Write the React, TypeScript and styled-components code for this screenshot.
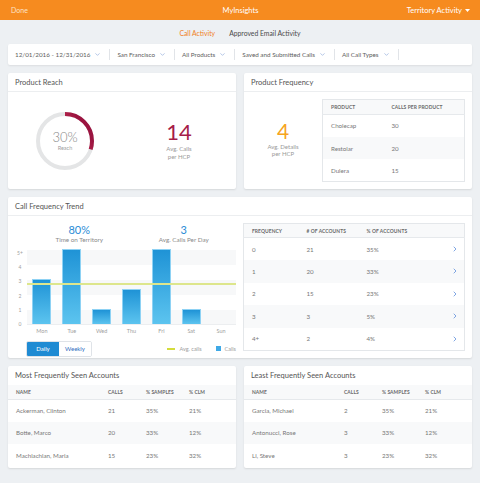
import React from "react";
import styled, { createGlobalStyle } from "styled-components";
import { ChevronDown, ChevronRight } from "lucide-react";

const GlobalStyle = createGlobalStyle`
  html, body {
    margin: 0;
    padding: 0;
    background: #edf0f3;
    font-family: Lato, "Open Sans", "Liberation Sans", sans-serif;
    color: #555;
  }
  * { box-sizing: border-box; }
`;

const filters = [
  "12/01/2016 - 12/31/2016",
  "San Francisco",
  "All Products",
  "Saved and Submitted Calls",
  "All Call Types",
];

const products = [
  { name: "Cholecap", calls: 30 },
  { name: "Restolar", calls: 20 },
  { name: "Dulera", calls: 15 },
];

const days = [
  { day: "Mon", value: 3 },
  { day: "Tue", value: 5 },
  { day: "Wed", value: 1 },
  { day: "Thu", value: 2.3 },
  { day: "Fri", value: 5 },
  { day: "Sat", value: 1 },
  { day: "Sun", value: 0 },
];

const frequencies = [
  { f: "0", n: 21, p: "35%" },
  { f: "1", n: 20, p: "33%" },
  { f: "2", n: 15, p: "23%" },
  { f: "3", n: 3, p: "5%" },
  { f: "4+", n: 2, p: "4%" },
];

const mostSeen = [
  { name: "Ackerman, Clinton", calls: 21, samples: "35%", clm: "21%" },
  { name: "Botte, Marco", calls: 20, samples: "33%", clm: "12%" },
  { name: "Machlachlan, Maria", calls: 15, samples: "23%", clm: "32%" },
];

const leastSeen = [
  { name: "Garcia, Michael", calls: 2, samples: "35%", clm: "21%" },
  { name: "Antonucci, Rose", calls: 3, samples: "33%", clm: "12%" },
  { name: "Li, Steve", calls: 3, samples: "23%", clm: "32%" },
];

const PLOT_HEIGHT = 75;
const MAX_VALUE = 5;
const AVG_CALLS = 2.55;

/* ---------- top bar & tabs ---------- */

const TopBar = styled.header`
  height: 20px;
  background: #f68b1f;
  display: grid;
  grid-template-columns: 1fr auto 1fr;
  align-items: center;
  padding: 0 10px 0 11px;
  color: #fff;
`;

const Done = styled.span`
  font-size: 7px;
  color: #fde3c6;
`;

const AppTitle = styled.span`
  font-size: 7.5px;
`;

const Menu = styled.span`
  justify-self: end;
  font-size: 7.5px;
  display: flex;
  align-items: center;
  gap: 3px;
`;

const Tabs = styled.nav`
  height: 24px;
  display: flex;
  justify-content: center;
  align-items: center;
  gap: 14px;
  padding-top: 2px;
`;

const Tab = styled.span<{ $active?: boolean }>`
  font-size: 6.8px;
  color: ${(p) => (p.$active ? "#f07f24" : "#4a4a4a")};
`;

/* ---------- layout ---------- */

const Main = styled.main`
  padding: 0 8px 15px;
  display: flex;
  flex-direction: column;
  gap: 8px;
`;

const FilterBar = styled.div`
  height: 21px;
  background: #fff;
  border-radius: 2px;
  box-shadow: 0 1px 2px rgba(0, 0, 0, 0.08);
  display: flex;
  align-items: center;
  padding-left: 7px;
`;

const Filter = styled.div`
  display: flex;
  align-items: center;
  gap: 4px;
  height: 11px;
  padding: 0 8px 0 7px;
  border-right: 1px solid #e1e4e8;
  font-size: 6.3px;
  color: #606060;
  white-space: nowrap;
  &:first-child { padding-left: 0; }
`;

const Row = styled.div<{ $height: number }>`
  display: grid;
  grid-template-columns: 1fr 1fr;
  gap: 8px;
  height: ${(p) => p.$height}px;
`;

const Card = styled.section<{ $height?: number }>`
  background: #fff;
  border-radius: 2px;
  box-shadow: 0 1px 2px rgba(0, 0, 0, 0.1);
  display: flex;
  flex-direction: column;
  overflow: hidden;
  ${(p) => (p.$height ? `height: ${p.$height}px;` : "")}
`;

const CardHeader = styled.h2<{ $border?: boolean }>`
  margin: 0;
  height: 19px;
  flex: none;
  display: flex;
  align-items: center;
  padding: 0 7px;
  font-size: 7.5px;
  font-weight: 400;
  color: #555;
  border-bottom: ${(p) => (p.$border === false ? "none" : "1px solid #eceef0")};
`;

const CardBody = styled.div`
  flex: 1;
  display: flex;
  align-items: center;
`;

/* ---------- KPI blocks ---------- */

const Half = styled.div`
  flex: 1;
  display: flex;
  justify-content: center;
  align-items: center;
`;

const Donut = styled.div`
  width: 58px;
  height: 58px;
  display: grid;
  place-items: center;
  & > svg { grid-area: 1 / 1; }
`;

const DonutText = styled.div`
  grid-area: 1 / 1;
  display: flex;
  flex-direction: column;
  align-items: center;
`;

const DonutValue = styled.span`
  font-size: 13px;
  font-weight: 300;
  color: #888;
  line-height: 1;
`;

const DonutLabel = styled.span`
  font-size: 5.5px;
  color: #a0a0a0;
  margin-top: 1px;
`;

const Kpi = styled.div`
  display: flex;
  flex-direction: column;
  align-items: center;
  text-align: center;
`;

const KpiValue = styled.span<{ $color: string; $size: number }>`
  font-size: ${(p) => p.$size}px;
  font-weight: 400;
  line-height: 1;
  color: ${(p) => p.$color};
`;

const KpiLabel = styled.span`
  font-size: 6px;
  line-height: 7.5px;
  color: #999;
  margin-top: 2px;
`;

const FreqKpi = styled.div`
  width: 78px;
  flex: none;
  display: flex;
  justify-content: center;
  padding-bottom: 4px;
`;

/* ---------- tables ---------- */

const BoxTable = styled.table<{ $margin: string }>`
  border-collapse: collapse;
  border: 1px solid #e4e7ea;
  margin: ${(p) => p.$margin};
  width: 100%;
`;

const Table = styled.table`
  border-collapse: collapse;
  width: 100%;
`;

const Th = styled.th<{ $w?: number; $h?: number }>`
  text-align: left;
  text-transform: uppercase;
  font-size: 4.9px;
  font-weight: 700;
  color: #6a6a6a;
  letter-spacing: 0.1px;
  height: ${(p) => p.$h ?? 14}px;
  padding: 0;
  ${(p) => (p.$w ? `width: ${p.$w}px;` : "")}
  background: #f8f9fa;
  border-bottom: 1px solid #e6e9ec;
  &:first-child { padding-left: 8px; }
`;

const Tr = styled.tr`
  &:nth-child(even) td { background: #f8f9fa; }
`;

const Td = styled.td<{ $h?: number }>`
  font-size: 6.2px;
  color: #777;
  height: ${(p) => p.$h ?? 22.5}px;
  padding: 0;
  &:first-child { padding-left: 8px; }
`;

const ChevronCell = styled.td`
  width: 14px;
  padding: 0;
  & > svg { display: block; }
`;

/* ---------- chart ---------- */

const TrendBody = styled.div`
  flex: 1;
  display: grid;
  grid-template-columns: 228px 1fr;
`;

const ChartColumn = styled.div`
  display: grid;
  grid-template-columns: 19px 1fr;
  grid-template-rows: auto ${PLOT_HEIGHT}px 12px auto;
  padding-top: 8px;
`;

const Stats = styled.div`
  grid-column: 2;
  display: grid;
  grid-template-columns: 1fr 1fr;
  margin-bottom: 3px;
`;

const Stat = styled.div`
  display: flex;
  flex-direction: column;
  align-items: center;
`;

const StatValue = styled.span`
  font-size: 11px;
  line-height: 12px;
  color: #2b8cd6;
`;

const StatLabel = styled.span`
  font-size: 6.3px;
  line-height: 8px;
  color: #8a8a8a;
`;

const Axis = styled.div`
  grid-column: 1;
  display: flex;
  flex-direction: column;
  justify-content: space-between;
  align-items: center;
  padding: 0 0 0 5px;
  margin: 0 0 -3px;
  font-size: 5px;
  color: #a0a0a0;
  line-height: 6px;
`;

const Plot = styled.div`
  position: relative;
  display: flex;
  align-items: flex-end;
  border-bottom: 1px solid #eceef0;
  background: repeating-linear-gradient(
    to bottom,
    #f7f8f9 0,
    #f7f8f9 15px,
    #fff 15px,
    #fff 30px
  );
`;

const BarSlot = styled.div`
  flex: 1;
  display: flex;
  justify-content: center;
  align-items: flex-end;
  height: 100%;
`;

const Bar = styled.div`
  width: 19px;
  background: linear-gradient(to bottom, #1f93d6, #5cc4ef);
  border: 1px solid #8ed2f4;
  border-bottom: none;
`;

const AvgLine = styled.div<{ $value: number }>`
  position: absolute;
  left: 0;
  right: 0;
  bottom: ${(p) => (p.$value / MAX_VALUE) * PLOT_HEIGHT}px;
  height: 2px;
  background: #dde68c;
`;

const DayLabels = styled.div`
  grid-column: 2;
  display: flex;
  align-items: center;
`;

const DayLabel = styled.span`
  flex: 1;
  text-align: center;
  font-size: 5.5px;
  color: #a0a0a0;
`;

const Controls = styled.div`
  grid-column: 1 / 3;
  display: flex;
  justify-content: space-between;
  align-items: center;
  padding: 3px 0 0 18px;
`;

const Toggle = styled.div`
  display: flex;
  border: 1px solid #dfe3e8;
  border-radius: 2px;
  overflow: hidden;
`;

const ToggleButton = styled.button<{ $active?: boolean }>`
  font-family: inherit;
  font-size: 6px;
  height: 14px;
  width: 32px;
  padding: 0;
  border: none;
  background: ${(p) => (p.$active ? "#1f8bd3" : "#fff")};
  color: ${(p) => (p.$active ? "#fff" : "#2d6cc0")};
`;

const Legend = styled.div`
  display: flex;
  align-items: center;
  gap: 4px;
  font-size: 5.5px;
  color: #a0a0a0;
`;

const LegendLine = styled.span`
  width: 8px;
  height: 1.5px;
  background: #d4dc3c;
`;

const LegendSquare = styled.span`
  width: 5px;
  height: 5px;
  background: #3fa9e6;
  margin-left: 10px;
`;

const TrendTableWrap = styled.div`
  padding: 7px;
`;

function FilterItem({ label }: { label: string }) {
  return (
    <Filter>
      {label}
      <ChevronDown size={7} color="#7f9fd6" strokeWidth={2} />
    </Filter>
  );
}

function ReachDonut({ percent }: { percent: number }) {
  const r = 27;
  const c = 2 * Math.PI * r;
  return (
    <Donut>
      <svg width="58" height="58" viewBox="0 0 58 58">
        <defs>
          <linearGradient id="reachArc" gradientUnits="userSpaceOnUse" x1="29" y1="0" x2="55" y2="40">
            <stop offset="0" stopColor="#f45d75" />
            <stop offset="0.35" stopColor="#e0405f" />
            <stop offset="1" stopColor="#9b1440" />
          </linearGradient>
        </defs>
        <circle cx="29" cy="29" r={r} fill="none" stroke="#e4e5e6" strokeWidth="4" />
        <circle
          cx="29"
          cy="29"
          r={r}
          fill="none"
          stroke="url(#reachArc)"
          strokeWidth="4"
          strokeDasharray={`${(c * percent) / 100} ${c}`}
          transform="rotate(-90 29 29)"
        />
      </svg>
      <DonutText>
        <DonutValue>{percent}%</DonutValue>
        <DonutLabel>Reach</DonutLabel>
      </DonutText>
    </Donut>
  );
}

function AccountsCard({ title, rows }: { title: string; rows: typeof mostSeen }) {
  return (
    <Card>
      <CardHeader $border={false}>{title}</CardHeader>
      <Table>
        <thead>
          <tr>
            <Th $w={100}>Name</Th>
            <Th $w={38}>Calls</Th>
            <Th $w={43}>% Samples</Th>
            <Th>% CLM</Th>
          </tr>
        </thead>
        <tbody>
          {rows.map((r) => (
            <Tr key={r.name}>
              <Td>{r.name}</Td>
              <Td>{r.calls}</Td>
              <Td>{r.samples}</Td>
              <Td>{r.clm}</Td>
            </Tr>
          ))}
        </tbody>
      </Table>
    </Card>
  );
}

export default function App() {
  return (
    <>
      <GlobalStyle />
      <TopBar>
        <Done>Done</Done>
        <AppTitle>MyInsights</AppTitle>
        <Menu>
          Territory Activity
          <svg width="5" height="3" viewBox="0 0 5 3">
            <path d="M0 0h5L2.5 3z" fill="#fff" />
          </svg>
        </Menu>
      </TopBar>
      <Tabs>
        <Tab $active>Call Activity</Tab>
        <Tab>Approved Email Activity</Tab>
      </Tabs>
      <Main>
        <FilterBar>
          {filters.map((f) => (
            <FilterItem key={f} label={f} />
          ))}
        </FilterBar>

        <Row $height={116}>
          <Card>
            <CardHeader>Product Reach</CardHeader>
            <CardBody>
              <Half>
                <ReachDonut percent={30} />
              </Half>
              <Half>
                <Kpi>
                  <KpiValue $color="#a61d48" $size={22}>14</KpiValue>
                  <KpiLabel>
                    Avg. Calls
                    <br />
                    per HCP
                  </KpiLabel>
                </Kpi>
              </Half>
            </CardBody>
          </Card>
          <Card>
            <CardHeader>Product Frequency</CardHeader>
            <CardBody>
              <FreqKpi>
                <Kpi>
                  <KpiValue $color="#f6a41e" $size={21}>4</KpiValue>
                  <KpiLabel>
                    Avg. Details
                    <br />
                    per HCP
                  </KpiLabel>
                </Kpi>
              </FreqKpi>
              <BoxTable $margin="0 7px 0 0">
                <thead>
                  <tr>
                    <Th $w={69} $h={15}>Product</Th>
                    <Th $h={15}>Calls per product</Th>
                  </tr>
                </thead>
                <tbody>
                  {products.map((p) => (
                    <Tr key={p.name}>
                      <Td>{p.name}</Td>
                      <Td>{p.calls}</Td>
                    </Tr>
                  ))}
                </tbody>
              </BoxTable>
            </CardBody>
          </Card>
        </Row>

        <Card $height={161}>
          <CardHeader>Call Frequency Trend</CardHeader>
          <TrendBody>
            <ChartColumn>
              <Stats>
                <Stat>
                  <StatValue>80%</StatValue>
                  <StatLabel>Time on Territory</StatLabel>
                </Stat>
                <Stat>
                  <StatValue>3</StatValue>
                  <StatLabel>Avg. Calls Per Day</StatLabel>
                </Stat>
              </Stats>
              <Axis>
                {["5+", "4", "3", "2", "1", "0"].map((l) => (
                  <span key={l}>{l}</span>
                ))}
              </Axis>
              <Plot>
                {days.map((d) => (
                  <BarSlot key={d.day}>
                    {d.value > 0 && (
                      <Bar style={{ height: `${(d.value / MAX_VALUE) * PLOT_HEIGHT}px` }} />
                    )}
                  </BarSlot>
                ))}
                <AvgLine $value={AVG_CALLS} />
              </Plot>
              <DayLabels>
                {days.map((d) => (
                  <DayLabel key={d.day}>{d.day}</DayLabel>
                ))}
              </DayLabels>
              <Controls>
                <Toggle>
                  <ToggleButton $active>Daily</ToggleButton>
                  <ToggleButton>Weekly</ToggleButton>
                </Toggle>
                <Legend>
                  <LegendLine />
                  Avg. calls
                  <LegendSquare />
                  Calls
                </Legend>
              </Controls>
            </ChartColumn>
            <TrendTableWrap>
              <BoxTable $margin="0">
                <thead>
                  <tr>
                    <Th $w={63}>Frequency</Th>
                    <Th $w={60}># of accounts</Th>
                    <Th>% of accounts</Th>
                    <Th $w={14} />
                  </tr>
                </thead>
                <tbody>
                  {frequencies.map((r) => (
                    <Tr key={r.f}>
                      <Td>{r.f}</Td>
                      <Td>{r.n}</Td>
                      <Td>{r.p}</Td>
                      <ChevronCell>
                        <ChevronRight size={8} strokeWidth={2} color="#3f78d4" />
                      </ChevronCell>
                    </Tr>
                  ))}
                </tbody>
              </BoxTable>
            </TrendTableWrap>
          </TrendBody>
        </Card>

        <Row $height={102}>
          <AccountsCard title="Most Frequently Seen Accounts" rows={mostSeen} />
          <AccountsCard title="Least Frequently Seen Accounts" rows={leastSeen} />
        </Row>
      </Main>
    </>
  );
}
